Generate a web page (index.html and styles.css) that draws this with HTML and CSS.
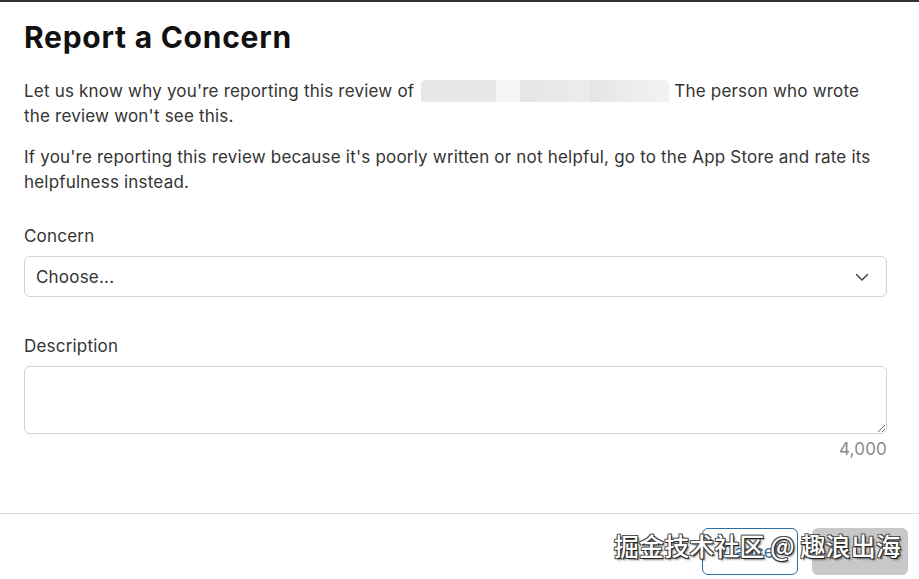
FILE: index.html
```html
<!DOCTYPE html>
<html>
<head>
<meta charset="utf-8">
<link rel="stylesheet" href="styles.css">
</head>
<body>
<div class="dialog">
  <div class="content">
    <h1 class="title">Report a Concern</h1>
    <p class="para">Let us know why you're reporting this review of <span class="redacted"><span class="r1"></span><span class="r2"></span><span class="r3"></span><span class="r4"></span></span> The person who wrote the review won't see this.</p>
    <p class="para para-2">If you're reporting this review because it's poorly written or not helpful, go to the App Store and rate its helpfulness instead.</p>
    <label class="label label-concern">Concern</label>
    <div class="select">
      <span class="select-text">Choose...</span>
      <svg class="chevron" width="14" height="9" viewBox="0 0 14 9"><path d="M1.5 1.5 L7 7 L12.5 1.5" fill="none" stroke="#444" stroke-width="1.5" stroke-linecap="round" stroke-linejoin="round"/></svg>
    </div>
    <label class="label label-desc">Description</label>
    <textarea class="textarea"></textarea>
    <div class="counter">4,000</div>
  </div>
  <div class="footer">
    <button class="btn btn-cancel">Cancel</button>
    <button class="btn btn-submit">Report</button>
  </div>
  <div class="watermark">掘金技术社区 @ 趣浪出海</div>
</div>
</body>
</html>
```

FILE: styles.css
```css
* { box-sizing: border-box; }
html, body { margin: 0; padding: 0; background: #fff; }
body {
  font-family: Inter, "Noto Sans", "Liberation Sans", sans-serif;
  color: #333;
  width: 919px;
  height: 579px;
  overflow: hidden;
}
.dialog {
  position: relative;
  border-top: 2px solid #333;
  height: 579px;
}
.content {
  padding: 0 32px 0 24px;
  display: flex;
  flex-direction: column;
}
.title {
  margin: 17px 0 0;
  font-size: 30px;
  line-height: 36px;
  font-weight: 700;
  color: #111;
  letter-spacing: 0.75px;
}
.para {
  margin: 24px 0 0;
  font-size: 17px;
  line-height: 25px;
  color: #333;
  letter-spacing: 0.2px;
}
.para-2 { margin-top: 16px; }
.redacted {
  display: inline-flex;
  vertical-align: -5px;
  width: 248px;
  height: 22px;
  margin-left: 2px;
  border-radius: 5px 5px 0 0;
  overflow: hidden;
  background: #e9e9e9;
}
.r1 { width: 75px; background: #e7e7e7; }
.r2 { width: 24px; background: #f5f5f5; }
.r3 { width: 70px; background: linear-gradient(90deg, #e5e5e5, #ececec); }
.r4 { flex: 1; background: linear-gradient(90deg, #e4e4e4, #eeeeee 60%, #f2f2f2); }
.label {
  display: block;
  font-size: 17px;
  line-height: 25px;
  color: #333;
  letter-spacing: 0.2px;
}
.label-concern { margin-top: 29px; }
.select {
  margin-top: 7px;
  height: 41px;
  width: 863px;
  border: 1px solid #d2d2d2;
  border-radius: 6px;
  display: flex;
  align-items: center;
  justify-content: space-between;
  padding: 0 17px 0 11px;
}
.select-text { font-size: 17px; color: #333; letter-spacing: 0.2px; }
.chevron { margin-top: 1px; }
.label-desc { margin-top: 37px; }
.textarea {
  margin-top: 7px;
  width: 863px;
  height: 68px;
  border: 1px solid #d2d2d2;
  border-radius: 6px;
  resize: vertical;
  font-family: inherit;
  font-size: 17px;
  display: block;
  outline: none;
}
.counter {
  width: 863px;
  text-align: right;
  font-size: 17px;
  line-height: 25px;
  color: #8a8a8a;
  margin-top: 3px;
  letter-spacing: 0.2px;
}
.footer {
  position: absolute;
  left: 0;
  right: 0;
  top: 511px;
  border-top: 1px solid #dcdcdc;
  display: flex;
  justify-content: flex-end;
  gap: 14px;
  padding: 14px 11px 0 0;
}
.btn {
  width: 96px;
  height: 47px;
  border-radius: 6px;
  font-family: inherit;
  font-size: 17px;
}
.btn-cancel {
  background: #fff;
  border: 1px solid #2f6ea3;
  color: #2f6ea3;
}
.btn-submit {
  background: #c8c8c8;
  border: none;
  color: #e6e6e6;
}
.watermark {
  position: absolute;
  left: 614px;
  top: 526px;
  font-family: "Noto Sans CJK SC", sans-serif;
  font-size: 25px;
  font-weight: 500;
  line-height: 34px;
  color: #fff;
  white-space: nowrap;
  text-shadow: 1px 1px 0 #222, -1px -1px 0 #555, 1px -1px 0 #444, -1px 1px 0 #444, 2px 2px 2px rgba(0,0,0,0.5);
  letter-spacing: 0.1px;
}
```
